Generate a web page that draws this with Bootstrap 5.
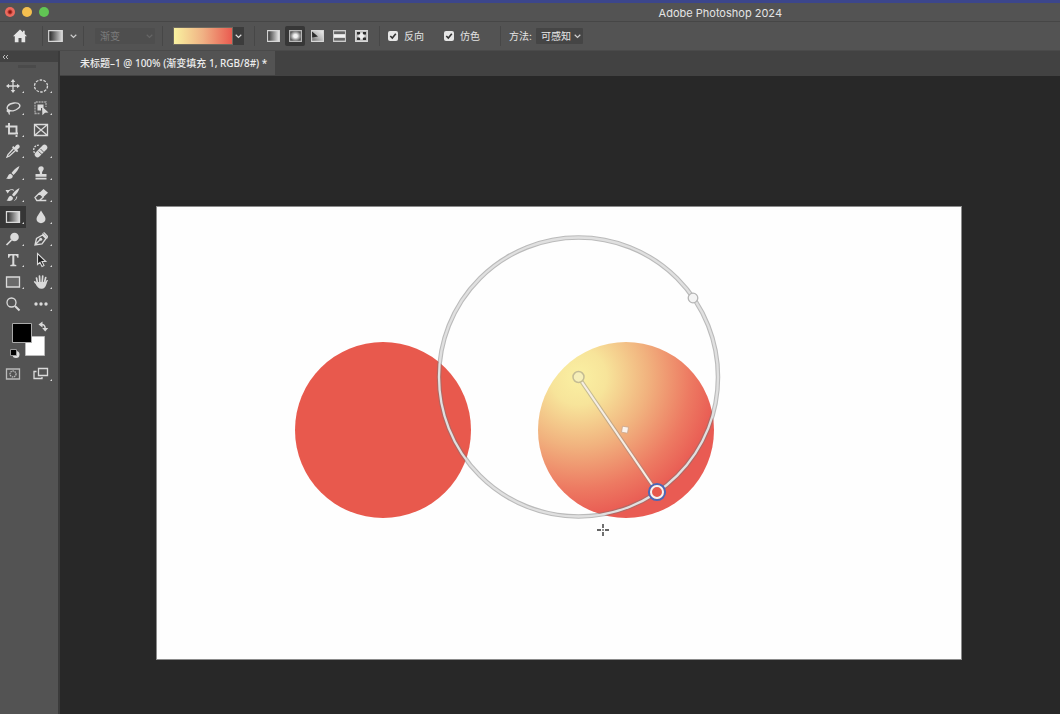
<!DOCTYPE html>
<html lang="zh-CN">
<head>
<meta charset="utf-8">
<meta name="viewport" content="width=device-width, initial-scale=1">
<title>Adobe Photoshop 2024</title>
<link href="https://cdn.jsdelivr.net/npm/bootstrap@5.3.0/dist/css/bootstrap.min.css" rel="stylesheet">
<style>
  body { background: #282828; color: #e4e4e4; font: 10px/16px Inter, "Noto Sans CJK SC", sans-serif; }
  button { color: inherit; }
  .title-strip { height: 22px; background: #535353; border-top: 3px solid #3c468c; border-bottom: 1px solid #464646; padding-left: 5px; }
  .title-strip h1 { font-size: 11px; line-height: 18px; font-weight: 400; margin-right: 278px; padding-top: 1px; }
  .lights { gap: 7px; }
  .light { width: 10px; height: 10px; padding: 0; border: 0; border-radius: 50%; }
  .light-close { background: radial-gradient(circle, #8c1710 0 1px, #ec6a5e 3px); }
  .light-min { background: #f4bf4f; }
  .light-max { background: #61c554; }
  .options { height: 29px; background: #535353; border-bottom: 1px solid #4a4a4a; }
  .rule { width: 1px; height: 20px; background: #474747; flex: none; }
  .bare { padding: 0; border: 0; background: none; display: flex; align-items: center; justify-content: center; flex: none; }
  .home-btn { width: 42px; height: 28px; padding-right: 2px; }
  .preset-btn { width: 40px; height: 28px; gap: 7px; padding-right: 2px; }
  .picker { appearance: none; height: 16px; border: 0; border-radius: 1px; font-size: 10px; line-height: 16px; padding: 0 10px 0 5px; flex: none;
    background: #454545 url("data:image/svg+xml,%3Csvg xmlns='http://www.w3.org/2000/svg' width='7' height='5'%3E%3Cpath d='M.7.8 3.5 3.5 6.3.8' fill='none' stroke='%23cfcfcf' stroke-width='1.2'/%3E%3C/svg%3E") no-repeat right 2px center; color: #e8e8e8; }
  .picker:disabled { background-color: #4e4e4e; background-image: url("data:image/svg+xml,%3Csvg xmlns='http://www.w3.org/2000/svg' width='7' height='5'%3E%3Cpath d='M.7.8 3.5 3.5 6.3.8' fill='none' stroke='%23656565' stroke-width='1.2'/%3E%3C/svg%3E"); color: #7b7b7b; opacity: 1; }
  .picker-type { width: 60px; margin: 0 7px 0 11px; }
  .picker-method { width: 47px; }
  .gradient-pick { margin: 0 10px; }
  .swatch { width: 60px; height: 18px; border: 1px solid #6f6a60; background: linear-gradient(90deg, #f9f2a0, #f0b184 50%, #ea5b50); }
  .swatch-menu { width: 11px; height: 18px; background: #3c3c3c; }
  .kinds { gap: 2px; }
  .kind { width: 20px; height: 20px; border-radius: 2px; }
  .kind.active { background: #373737; }
  .check-pair { gap: 6px; }
  .tick.form-check-input { width: 10px; height: 10px; margin: 0; border: 0; border-radius: 2px; background: #e6e6e6 url("data:image/svg+xml,%3Csvg xmlns='http://www.w3.org/2000/svg' viewBox='0 0 10 10'%3E%3Cpath d='m2.3 5 2 2L7.8 2.8' fill='none' stroke='%23333' stroke-width='1.6'/%3E%3C/svg%3E") center / 100% no-repeat; }
  .tools { width: 60px; background: #535353; border-right: 2px solid #3b3b3b; flex: none; }
  .tools-head { height: 11px; background: #424242; }
  .grip { width: 18px; height: 3px; background: #4a4a4a; margin: 3px 0 0 18px; }
  .tool-grid { display: grid; grid-template-columns: 26px 26px; grid-template-rows: repeat(11, minmax(0, 1fr)); column-gap: 2px; height: 240px; margin-top: 7px; }
  .tool-grid svg, .mode-row svg { width: 26px; height: 22px; flex: none; }
  .tool { width: 26px; min-height: 0; }
  .tool.active { background: #363636; }
  .ico { fill: none; stroke: #dadada; stroke-width: 1.3; }
  .ico .f { fill: #dadada; stroke: none; }
  .mode-row { gap: 2px; margin-top: 4px; }
  .tab-strip { height: 25px; background: #424242; }
  .doc-tab { background: #535353; color: #ededed; padding: 0 8px 0 20px; font: 500 10px/24px "Noto Sans", "Noto Sans CJK SC", sans-serif; height: 24px; text-decoration: none; }
  .workspace { padding: 130px 98px 55px 96px; background: #282828; }
  .artboard { background: #fefefe; outline: 1px solid #8b8b8b; outline-offset: -1px; }
</style>
</head>
<body class="min-vh-100 d-flex flex-column">

<header class="title-strip d-flex align-items-center">
  <div class="lights d-flex align-items-center">
    <button class="light light-close" aria-label="关闭"></button>
    <button class="light light-min" aria-label="最小化"></button>
    <button class="light light-max" aria-label="缩放"></button>
  </div>
  <h1 class="ms-auto mb-0 text-nowrap">Adobe Photoshop 2024</h1>
</header>

<div class="options d-flex align-items-center" role="toolbar" aria-label="选项">
  <button class="bare home-btn" aria-label="主页">
    <svg width="16" height="14" viewBox="0 0 16 14"><path fill="#e6e6e6" d="M8 .5 1 7.2h1.8v6h3.700V9h3v4.200h3.700v-6H15l-2.300-2.300V1.800H11v1.500z"/></svg>
  </button>
  <span class="rule"></span>
  <button class="bare preset-btn" aria-label="渐变工具预设">
    <svg width="15" height="12" viewBox="0 0 15 12"><defs><linearGradient id="g1"><stop stop-color="#222"/><stop offset="1" stop-color="#ddd"/></linearGradient></defs><path d="M.7.7h13.6v10.6H.7z" fill="url(#g1)" stroke="#d8d8d8" stroke-width="1.2"/></svg>
    <svg width="7" height="5" viewBox="0 0 7 5"><path d="M.7.8 3.5 3.5 6.3.8" fill="none" stroke="#ccc" stroke-width="1.2"/></svg>
  </button>
  <span class="rule"></span>
  <select class="picker picker-type" aria-label="渐变类型" disabled><option>渐变</option></select>
  <span class="rule"></span>
  <div class="gradient-pick d-flex">
    <button class="bare swatch" aria-label="编辑渐变"></button>
    <button class="bare swatch-menu" aria-label="打开渐变拾色器"><svg width="7" height="5" viewBox="0 0 7 5"><path d="M.7.8 3.5 3.5 6.3.8" fill="none" stroke="#ddd" stroke-width="1.2"/></svg></button>
  </div>
  <span class="rule"></span>
  <div class="d-flex ms-2 me-2 kinds">
    <button class="bare kind" aria-label="线性渐变"><svg width="13" height="12" viewBox="0 0 13 12"><defs><linearGradient id="g2"><stop stop-color="#333"/><stop offset="1" stop-color="#eee"/></linearGradient></defs><path d="M.6.6h11.8v10.8H.6z" fill="url(#g2)" stroke="#d8d8d8" stroke-width="1.1"/></svg></button>
    <button class="bare kind active" aria-label="径向渐变"><svg width="13" height="12" viewBox="0 0 13 12"><defs><radialGradient id="g3"><stop offset=".3" stop-color="#f2f2f2"/><stop offset="1" stop-color="#555"/></radialGradient></defs><path d="M.6.6h11.8v10.8H.6z" fill="url(#g3)" stroke="#bbb" stroke-width="1.1"/></svg></button>
    <button class="bare kind" aria-label="角度渐变"><svg width="13" height="12" viewBox="0 0 13 12"><defs><linearGradient id="g4" x1="0" y1="1" x2="1" y2="0"><stop stop-color="#666"/><stop offset=".5" stop-color="#bbb"/><stop offset="1" stop-color="#f2f2f2"/></linearGradient></defs><path d="M.6.6h11.8v10.8H.6z" fill="url(#g4)" stroke="#d8d8d8" stroke-width="1.1"/><path d="M1 1.500 7 6.500 1.200 7.500z" fill="#2c2c2c"/></svg></button>
    <button class="bare kind" aria-label="对称渐变"><svg width="13" height="12" viewBox="0 0 13 12"><path d="M.6.6h11.8v10.8H.6z" fill="#777" stroke="#ccc" stroke-width="1.1"/><path d="M1 4.200h11v3.600H1z" fill="#f2f2f2"/><path d="M1 3h11M1 9h11" stroke="#555" stroke-width="1.2"/></svg></button>
    <button class="bare kind" aria-label="菱形渐变"><svg width="13" height="12" viewBox="0 0 13 12"><path d="M.6.6h11.8v10.8H.6z" fill="#bbb" stroke="#d8d8d8" stroke-width="1.1"/><path d="M2 2h3v2.500H2zM8 2h3v2.500H8zM2 7.500h3V10H2zM8 7.500h3V10H8z" fill="#2c2c2c"/><path d="M6.500 2.500 10 6l-3.500 3.500L3 6z" fill="#eee"/></svg></button>
  </div>
  <span class="rule"></span>
  <div class="check-pair d-flex align-items-center ms-2"><input class="tick form-check-input" type="checkbox" id="rev" checked><label for="rev">反向</label></div>
  <div class="check-pair d-flex align-items-center ms-3 ps-1 me-3 pe-1"><input class="tick form-check-input" type="checkbox" id="dither" checked><label for="dither">仿色</label></div>
  <span class="rule"></span>
  <label class="ms-2 me-1 text-nowrap" for="method">方法:</label>
  <select class="picker picker-method" id="method"><option>可感知</option></select>
</div>

<div class="d-flex flex-grow-1">
  <aside class="tools">
    <div class="tools-head"><svg class="d-block" width="12" height="11" viewBox="0 0 12 11"><path d="M5 4 3 6l2 2M8 4 6 6l2 2" fill="none" stroke="#bbb"/></svg></div>
    <div class="grip"></div>
    <div class="tool-grid">
      <button class="bare tool" aria-label="移动"><svg class="ico" viewBox="-13 -11 26 22"><path d="M-5 0H5M0-5V5"/><path class="f" d="m0-7 2.300 3h-4.600zM0 7l2.300-3h-4.600zM-7 0l3-2.300v4.600zM7 0 4-2.300v4.600zM11 5v2H9z"/></svg></button>
      <button class="bare tool" aria-label="椭圆选框"><svg class="ico" viewBox="-13 -11 26 22"><ellipse rx="6.5" ry="6" stroke-dasharray="2.6 1.3"/><path class="f" d="M11 5v2H9z"/></svg></button>
      <button class="bare tool" aria-label="套索"><svg class="ico" viewBox="-13 -11 26 22"><path d="M-4 2.800C-8 0-5-4.400 1-5c6-.5 7.500 3 4 5.600C2 3.200-2 3.500-4 2c-1.600-1-2.500 1-1 1.800C-3 5-3 2-4.200 2.500-5.600 3.300-2.800 5-4 6.500"/><path class="f" d="M11 5v2H9z"/></svg></button>
      <button class="bare tool" aria-label="对象选择"><svg class="ico" viewBox="-13 -11 26 22"><path d="M-1.500 5.500H-6V-6H5v5" stroke="#a8a8a8" stroke-dasharray="2 .8"/><path class="f" d="M-3.500-3.500h6V0H0v2.500h-3.500zM1-1.500l6.500 6-3.500.2-2.600 2.500zM11 5v2H9z"/></svg></button>
      <button class="bare tool" aria-label="裁剪"><svg class="ico" viewBox="-13 -11 26 22"><path d="M-7.500-3.500h11v7M-4-7v10.500h9M3.500 5v2" stroke-width="1.900"/><path class="f" d="M11 5v2H9z"/></svg></button>
      <button class="bare tool" aria-label="图框"><svg class="ico" viewBox="-13 -11 26 22"><path d="M-6.500-5.500h13v11h-13zM-6.500-5.500l13 11M6.500-5.500l-13 11"/></svg></button>
      <button class="bare tool" aria-label="吸管"><svg class="ico" viewBox="-13 -11 26 22"><path d="M1-3-5 3.500-6 6l2.500-1L3-1"/><path class="f" d="M-1-3.700.3-5l1.200 1.200 1.600-2c2-2 5 .7 3 2.900l-2 1.700L5.300 0 4 1.300zM11 5v2H9z"/></svg></button>
      <button class="bare tool" aria-label="污点修复"><svg class="ico" viewBox="-13 -11 26 22"><path d="M-6.500 2c-2-4 0-8 5-8" stroke-dasharray="2 1"/><path d="m-3.500 3.500 7-7" stroke-width="5.500" stroke-linecap="round"/><path d="M-2.500.5 1 3.500M-.5-2 3 1.500" stroke="#535353" stroke-width=".9"/><path class="f" d="M11 5v2H9z"/></svg></button>
      <button class="bare tool" aria-label="画笔"><svg class="ico" viewBox="-13 -11 26 22"><path class="f" d="M6.500-7C3-5 0-2.500-1.500 0L.5 2C3-.5 6-4 6.500-7zM-2.200.7C-5 .7-4.500 4-7 5.500-4 6.500 0 6-.2 2.700zM11 5v2H9z"/></svg></button>
      <button class="bare tool" aria-label="仿制图章"><svg class="ico" viewBox="-13 -11 26 22"><path class="f" d="M-1.200 1C-.5-2-3-2.500-2.700-4.500-2.200-7.500 2.700-7.500 2.700-4.500 2.900-2.500.5-2 1.200 1h4.300v2.800h-11V1zM-5.500 4.800h11v1.700h-11zM11 5v2H9z"/></svg></button>
      <button class="bare tool" aria-label="历史记录画笔"><svg class="ico" viewBox="-13 -11 26 22"><path class="f" d="M6.500-7C3-5 0-2.500-1 0L1 1.500C3-.5 6-4 6.500-7zM-2 .7C-4.500.7-4.500 4-6.500 5.500-3.500 6.500 0 6 0 2.700zM11 5v2H9zM-7.500-5l4.500 0-2.300 3.500z"/><path d="M-4.500-4.200C-2-6 0-5.500 1-4.500M3.800 1.500C3.500 4 2.500 5 1.500 5.500" stroke-width="1"/></svg></button>
      <button class="bare tool" aria-label="橡皮擦"><svg class="ico" viewBox="-13 -11 26 22"><path d="M-6 2.500-1.700-1.800 2.300 2-1.700 5.500h-2.500zM-1.700 5.500h7"/><path class="f" d="M-1.800-2 2.500-6 7-2.200 2.500 2zM11 5v2H9z"/></svg></button>
      <button class="bare tool active" aria-label="渐变" aria-pressed="true"><svg class="ico" viewBox="-13 -11 26 22"><path d="M-6.500-5.300h13V5.300h-13z" fill="url(#g1)"/><path class="f" d="M11 5v2H9z"/></svg></button>
      <button class="bare tool" aria-label="模糊"><svg class="ico" viewBox="-13 -11 26 22"><path class="f" d="M0-6.500C2-3 4.500-.5 4.500 2 4.500 7.500-4.500 7.500-4.500 2-4.500-.5-2-3 0-6.500zM11 5v2H9z"/></svg></button>
      <button class="bare tool" aria-label="减淡"><svg class="ico" viewBox="-13 -11 26 22"><circle class="f" cx="1.500" cy="-2" r="4.300"/><path d="m-1.500 1-5 5" stroke-width="1.700"/><path class="f" d="M11 5v2H9z"/></svg></button>
      <button class="bare tool" aria-label="钢笔"><svg class="ico" viewBox="-13 -11 26 22"><path d="M-6 6-4.500-.5 1.500-4 5-.5 1 5zM-6 6-1 .8M1.500-5.500 6.500-.8"/><circle class="f" cx="-.3" cy=".3" r="1.500"/><path class="f" d="M11 5v2H9zM2-6.500l1.500-.2L7-3v2z"/></svg></button>
      <button class="bare tool" aria-label="文字"><svg class="ico" viewBox="-13 -11 26 22"><path class="f" d="M-5-6H5.500v3.700H4.300C4-4.200 3.500-4.600 1.300-4.600v9L3.300 5v1.200h-6V5l2-.6v-9C-3-4.600-3.500-4.200-3.800-2.300H-5zM11 5v2H9z"/></svg></button>
      <button class="bare tool" aria-label="路径选择"><svg class="ico" viewBox="-13 -11 26 22"><path d="M-3.500-6.500v11L-1 2.300 1 6.500 3 5.500 1 1.500h3.800z" fill="#222" stroke-width="1.100"/><path class="f" d="M11 5v2H9z"/></svg></button>
      <button class="bare tool" aria-label="矩形"><svg class="ico" viewBox="-13 -11 26 22"><path d="M-6.500-5h13V5h-13z" fill="#6a6a6a"/><path class="f" d="M11 5v2H9z"/></svg></button>
      <button class="bare tool" aria-label="抓手"><svg class="ico" viewBox="-13 -11 26 22"><path d="M-3.500 1-4.500-4M-1.200 0-1.500-6M1.200 0 1.700-6M3.300 1 4.700-4.500M-3.500 3-6.300-.2" stroke-width="1.700" stroke-linecap="round"/><path class="f" d="M-4.300 0h8.500c1.200-2 2-2.300 2.800-2C5.500 1 5 6.500 1 6.800-2.500 7-3.500 5-5 2.500zM11 5v2H9z"/></svg></button>
      <button class="bare tool" aria-label="缩放"><svg class="ico" viewBox="-13 -11 26 22"><circle cx="-1.500" cy="-1.500" r="4.500"/><path d="m2 2 4.500 4.500" stroke-width="2"/></svg></button>
      <button class="bare tool" aria-label="更多工具"><svg class="ico" viewBox="-13 -11 26 22"><circle class="f" cx="-5" r="1.700"/><circle class="f" r="1.700"/><circle class="f" cx="5" r="1.700"/><path class="f" d="M11 5v2H9z"/></svg></button>
    </div>
    <svg class="d-block" width="58" height="44" viewBox="0 0 58 44" role="img" aria-label="前景色和背景色">
      <path d="M25.500 21.500h19v19h-19z" fill="#fff" stroke="#bbb"/>
      <path d="M12.500 8.500h19v19h-19z" fill="#000" stroke="#aaa"/>
      <path d="M41 9.500q4-.5 4.200 4" fill="none" stroke="#dadada" stroke-width="1.500"/><path fill="#dadada" d="m38.500 9.500 4-3v6zM45.200 16.500l-3-3.500h6z"/>
      <circle cx="16" cy="39.500" r="3.500" fill="#ddd"/><path d="M10.500 34.500h6v6h-6z" fill="#000" stroke="#999"/>
    </svg>
    <div class="mode-row d-flex">
      <button class="bare" aria-label="快速蒙版"><svg class="ico" viewBox="-13 -11 26 22"><g stroke="#bbb"><path d="M-6.500-5h13V5h-13z"/><circle r="3" stroke-dasharray="1.500 .7"/></g></svg></button>
      <button class="bare" aria-label="屏幕模式"><svg class="ico" viewBox="-13 -11 26 22"><path d="M-2.500-5.500h9v7h-9z"/><path d="M-4.500-2.500h-2.500v7h8V3"/><path class="f" d="M11 5v2H9z"/></svg></button>
    </div>
  </aside>

  <main class="flex-grow-1 d-flex flex-column">
    <nav class="tab-strip d-flex"><a class="doc-tab text-nowrap" href="#artboard">未标题–1 @ 100% (渐变填充 1, RGB/8#) *</a></nav>
    <section class="workspace flex-grow-1">
      <svg id="artboard" class="artboard d-block w-100 h-auto" viewBox="0 0 806 454" role="img" aria-label="画布">
        <defs>
          <radialGradient id="ball" gradientUnits="userSpaceOnUse" cx="422.500" cy="171" r="139.500">
            <stop offset="0" stop-color="#faf0a2"/><stop offset=".2" stop-color="#f7e49a"/><stop offset=".5" stop-color="#f1b27e"/><stop offset=".8" stop-color="#ed7a62"/><stop offset="1" stop-color="#e95b53"/>
          </radialGradient>
        </defs>
        <circle cx="227" cy="224" r="88" fill="#e8594d"/>
        <circle cx="470" cy="224" r="88" fill="url(#ball)"/>
        <g fill="none">
          <circle cx="422.500" cy="171" r="139.500" stroke="#777" stroke-opacity=".5" stroke-width="4.500"/>
          <circle cx="422.500" cy="171" r="139.500" stroke="#e0e0e0" stroke-width="2.300"/>
          <path d="m422.500 171 78.500 115" stroke="#888" stroke-opacity=".45" stroke-width="4"/>
          <path d="m422.500 171 78.500 115" stroke="#f6eee4" stroke-width="2.200"/>
          <circle cx="422.500" cy="171" r="5.500" fill="#f6efb8" stroke="#c4bc94" stroke-width="1.500"/>
          <circle cx="537" cy="92" r="4.800" fill="#f4f4f4" stroke="#b5b5b5" stroke-width="1.300"/>
          <circle cx="501" cy="286" r="8" stroke="#4a68b8" stroke-width="2.200" fill="#e8594d"/>
          <circle cx="501" cy="286" r="6" stroke="#f4f4f4" stroke-width="2"/>
        </g>
        <path d="m466.500 220.200 6 1-1 6-6-1z" fill="#fbf3ee" stroke="#c9a58c" stroke-width=".8"/>
        <path d="M441 324h4m4 0h4m-6-6v4m0 4v4m-.7-6h1.400" stroke="#333" stroke-width="1.400"/>
      </svg>
    </section>
  </main>
</div>
<script src="https://cdn.jsdelivr.net/npm/bootstrap@5.3.0/dist/js/bootstrap.bundle.min.js"></script>
</body>
</html>
